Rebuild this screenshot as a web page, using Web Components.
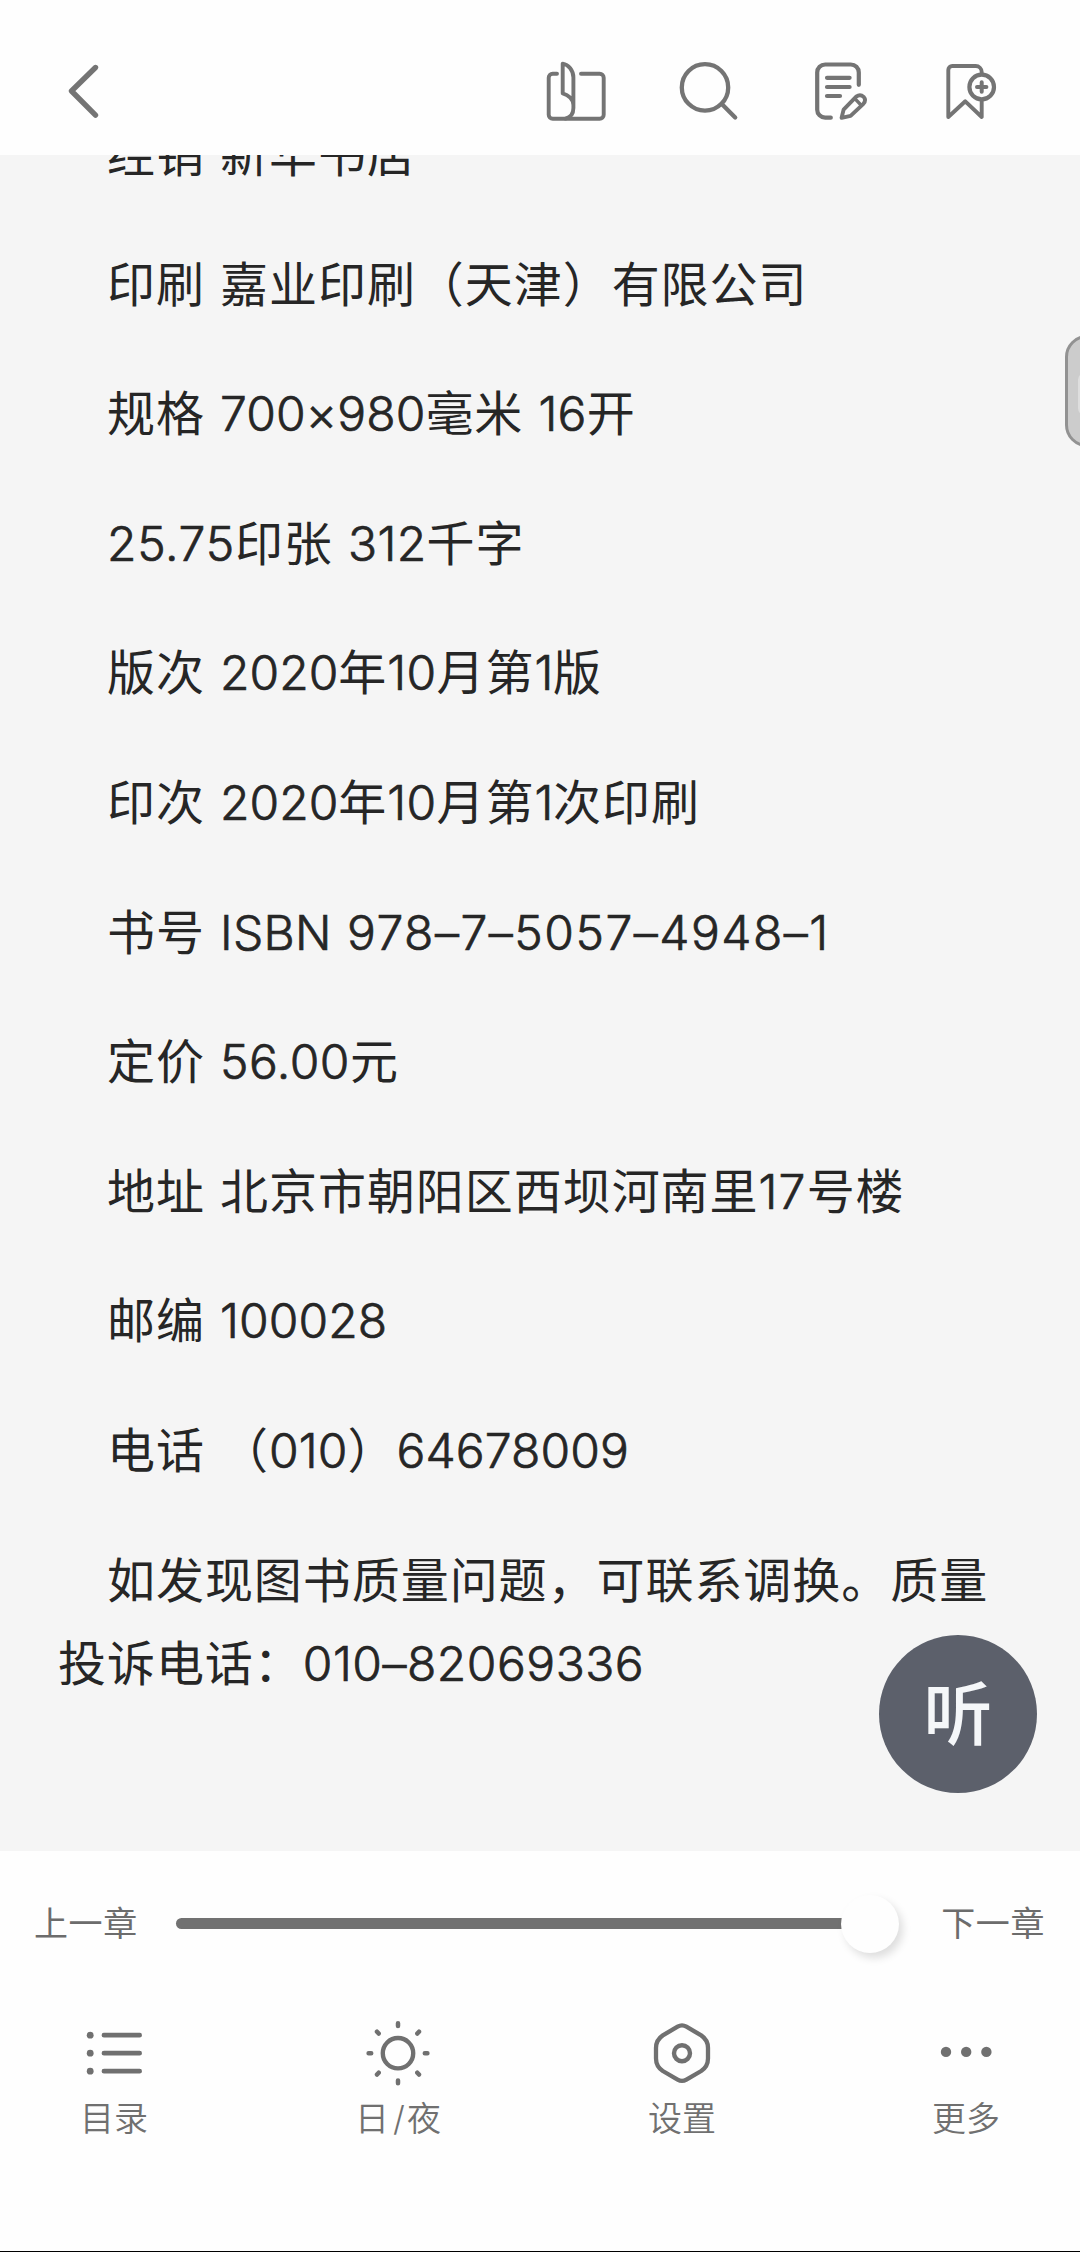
<!DOCTYPE html>
<html lang="zh-CN">
<head>
<meta charset="utf-8">
<meta name="viewport" content="width=device-width">
<title>阅读</title>
<style>
html, body{
    margin: 0;
    padding: 0;
    background: #fefefe;
}
body{
    font-family: Inter, "Noto Sans CJK SC", sans-serif;
    font-feature-settings: "calt" 0;
}
</style>
</head>
<body>
<reader-app>
    <reader-header slot="header"></reader-header>

    <book-line>经销 新华书店</book-line>
    <book-line>印刷 嘉业印刷（天津）有限公司</book-line>
    <book-line>规格 <book-num spacing="0.1">700×980</book-num>毫米 <book-num spacing="0.2">16</book-num>开</book-line>
    <book-line><book-num spacing="0.7">25.75</book-num>印张 <book-num spacing="0.4">312</book-num>千字</book-line>
    <book-line>版次 <book-num spacing="0">2020</book-num>年<book-num spacing="0.4">10</book-num>月第<book-num>1</book-num>版</book-line>
    <book-line>印次 <book-num spacing="0">2020</book-num>年<book-num spacing="0.4">10</book-num>月第<book-num>1</book-num>次印刷</book-line>
    <book-line>书号 <book-num spacing="0.3">ISBN</book-num> <book-num spacing="1.5">978–7–5057–4948–1</book-num></book-line>
    <book-line>定价 <book-num spacing="0.5">56.00</book-num>元</book-line>
    <book-line>地址 北京市朝阳区西坝河南里<book-num spacing="1.2">17</book-num>号楼</book-line>
    <book-line>邮编 <book-num spacing="0.1">100028</book-num></book-line>
    <book-line>电话 （<book-num spacing="0.1">010</book-num>）<book-num spacing="0.1">64678009</book-num></book-line>
    <book-line>如发现图书质量问题，可联系调换。质量投诉电话：<book-num spacing="0.5">010–82069336</book-num></book-line>

    <listen-button slot="float">听</listen-button>
    <edge-handle slot="float"></edge-handle>

    <chapter-slider slot="footer">
        <span slot="prev">上一章</span>
        <span slot="next">下一章</span>
    </chapter-slider>
    <reader-nav slot="footer">
        <nav-item icon="list">目录</nav-item>
        <nav-item icon="sun">日<span style="margin:0 2px 0 4px">/</span>夜</nav-item>
        <nav-item icon="settings">设置</nav-item>
        <nav-item icon="more">更多</nav-item>
    </reader-nav>
</reader-app>

<script>
"use strict"

// every icon is drawn in a 72 x 72 box
const ICONS = {
    back: `<path d="M43.5 11.5 19.5 35 43.5 59.2" stroke-width="5.4"/>`,
    book: `
        <path d="M17 17.7H12.7a4 4 0 0 0-4 4v37a4 4 0 0 0 4 4h47a4 4 0 0 0 4-4v-37a4 4 0 0 0-4-4H41" stroke-width="3.9"/>
        <path d="M22.7 37.3V7.6C28.5 8.5 33.4 14.5 33.4 21.5V52C33.4 58 30 61.5 25.5 62.6M22.7 37.3C28.5 39 33.4 43.5 33.4 49" stroke-width="3.9"/>`,
    search: `
        <circle cx="33" cy="31.4" r="23.2" stroke-width="4.3"/>
        <path d="M50.3 48.6 63.2 61.5" stroke-width="4.3"/>`,
    note: `
        <path d="M26.8 61.7H21.2a8 8 0 0 1-8-8V16.5a8 8 0 0 1 8-8H46.8a8 8 0 0 1 8 8V28.8M23 21.8H45.6M23 31H45.6M23 40H36" stroke-width="4.2"/>
        <path d="M37.6 61.8 39.6 53.6 52.2 40.6Q56.2 37.6 59.6 40.8 62.6 44.2 59.4 47.8L46.6 59.8Z" stroke-width="3.9"/>
        <path d="M51.6 43.4 57 49" stroke-width="3.4"/>`,
    mark: `
        <path d="M45.7 18V16a6 6 0 0 0-6-6H16.3a4 4 0 0 0-4 4V61L29.3 45.3 45.7 61V44" stroke-width="3.9"/>
        <circle cx="45.7" cy="31" r="12.3" stroke-width="4.2"/>
        <path d="M41 31h9.4M45.7 26.3v9.4" stroke-width="4"/>`,
    list: `
        <path d="M25.2 18.2H60.8M25.2 36.2H60.8M25.2 54.2H60.8" stroke-width="4.8" transform="translate(.8 0)"/>
        <g fill="currentColor" stroke="none">
            <circle cx="12.2" cy="18.2" r="3.4"/><circle cx="12.2" cy="36.2" r="3.4"/><circle cx="12.2" cy="54.2" r="3.4"/>
        </g>`,
    sun: `
        <circle cx="36" cy="36.2" r="15.2" stroke-width="4.4"/>
        <path d="M36 6.3v2.6M36 63.4v2.8M6.6 36.2h2.6M62.8 36.2h2.6M15 14.7l1.7 1.8M55.3 55.7l1.7 1.8M57 14.7l-1.7 1.8M16.7 55.7 15 57.5" stroke-width="4.5"/>`,
    settings: `
        <path d="M31.6 9.7Q36 7.2 40.4 9.7L55.2 18.4Q62 23 62 31V41.5Q62 49.4 55.2 54L40.4 62.7Q36 65.2 31.6 62.7L16.8 54Q10 49.4 10 41.5V31Q10 23 16.8 18.4Z" stroke-width="4.3"/>
        <circle cx="36" cy="36.2" r="8" stroke-width="4.4"/>`,
    more: `
        <g fill="currentColor" stroke="none">
            <circle cx="16" cy="34.9" r="5.2"/><circle cx="36.2" cy="34.9" r="5.2"/><circle cx="56.4" cy="34.9" r="5.2"/>
        </g>`
}

class BaseElement extends HTMLElement{
    constructor(){
        super();

        this.attachShadow({mode: "open"});
    }

    // no space between the two parts: inline elements would show it
    connectedCallback(){
        this.shadowRoot.innerHTML = `${this.styles()}${this.render()}`
    }

    render(){
        return `<slot></slot>`
    }
}

class UiIcon extends BaseElement{
    render(){
        return `
            <svg width="72" height="72" viewBox="0 0 72 72" fill="none" stroke="currentColor"
                stroke-linecap="round" stroke-linejoin="round">${ICONS[this.getAttribute('name')]}</svg>
        `
    }

    styles(){
        return `<style>
        :host{ display: block; width: 72px; height: 72px; }
        svg{ display: block; }
        </style>`
    }
}

class ReaderApp extends BaseElement{
    render(){
        return `
            <slot name="header"></slot>
            <main><div class="page"><slot></slot></div></main>
            <footer><slot name="footer"></slot></footer>
            <slot name="float"></slot>
        `
    }

    styles(){
        return `<style>
        :host{
            display: flex;
            flex-direction: column;
            position: relative;
            box-sizing: border-box;
            height: 2252px;
            overflow: hidden;
            background: #fefefe;
            border-bottom: 1px solid #000;
        }
        main{
            height: 1696px;
            flex: none;
            overflow: hidden;
            background: #f5f5f5;
        }
        /* the text is scrolled, so its first line is cut by the header */
        .page{
            margin-top: -42px;
            padding: 0 57px 0 58px;
        }
        footer{
            flex: 1;
            display: flex;
            flex-direction: column;
        }
        </style>`
    }
}

class ReaderHeader extends BaseElement{
    render(){
        return `
            <ui-icon name="back"></ui-icon>
            <div class="tools">
                ${['book', 'search', 'note', 'mark'].map(name => `<ui-icon name="${name}"></ui-icon>`).join('\n')}
            </div>
        `
    }

    styles(){
        return `<style>
        :host{
            display: flex;
            justify-content: space-between;
            flex: none;
            box-sizing: border-box;
            height: 155px;
            padding: 56px 72px 0 52px;
            background: #fefefe;
            color: #747474;
        }
        .tools{
            display: flex;
            gap: 60px;
        }
        </style>`
    }
}

class BookLine extends BaseElement{
    styles(){
        return `<style>
        :host{
            display: block;
            margin-bottom: 45.9px;
            font-size: 48px;
            line-height: 83.7px;
            letter-spacing: 0.95px;
            word-spacing: 0.7px;
            text-indent: 49px;
            color: #262626;
            word-break: break-all;
        }
        </style>`
    }
}

// digits and latin letters: light face, thickened a little to sit beside the hanzi
class BookNum extends BaseElement{
    styles(){
        return `<style>
        :host{
            display: inline;
            font-weight: 300;
            -webkit-text-stroke: 0.7px currentColor;
            letter-spacing: ${this.getAttribute('spacing') || -0.3}px;
        }
        </style>`
    }
}

class ListenButton extends BaseElement{
    styles(){
        return `<style>
        :host{
            position: absolute;
            left: 879px;
            top: 1634.5px;
            width: 158px;
            height: 158px;
            display: flex;
            align-items: center;
            justify-content: center;
            border-radius: 50%;
            background: #5c606b;
            color: #f5f7f9;
            font-size: 69px;
            font-weight: 500;
            line-height: 72px;
        }
        slot{
            display: block;
            padding-top: 2px;
        }
        </style>`
    }
}

class EdgeHandle extends BaseElement{
    render(){
        return `<i></i>`
    }

    styles(){
        return `<style>
        :host{
            position: absolute;
            left: 1065px;
            top: 335px;
            width: 60px;
            height: 112px;
            box-sizing: border-box;
            border: 3px solid #929292;
            border-radius: 22px;
            background: #cccccc;
        }
        i{
            display: block;
            width: 30px;
            height: 44px;
            margin: 34px 0 0 10px;
            border-radius: 8px;
            background: #dedede;
        }
        </style>`
    }
}

class ChapterSlider extends BaseElement{
    render(){
        return `
            <slot name="prev"></slot>
            <div class="track"><div class="thumb"></div></div>
            <slot name="next"></slot>
        `
    }

    styles(){
        return `<style>
        :host{
            display: flex;
            align-items: center;
            justify-content: space-between;
            height: 145px;
            padding: 0 35px 0 34px;
            font-size: 34px;
            line-height: 50px;
            letter-spacing: 0.6px;
            color: #6c6c6c;
        }
        .track{
            display: flex;
            align-items: center;
            justify-content: flex-end;
            width: 723px;
            height: 11.5px;
            margin-right: 4px;
            border-radius: 6px;
            background: linear-gradient(90deg, #717171 690px, transparent 690px);
        }
        .thumb{
            flex: none;
            width: 58px;
            height: 58px;
            border-radius: 50%;
            background: #fefefe;
            box-shadow: 4px 5px 9px rgba(0, 0, 0, .13);
        }
        </style>`
    }
}

class ReaderNav extends BaseElement{
    styles(){
        return `<style>
        :host{
            display: flex;
            justify-content: space-between;
            padding: 21px 54px 0 54px;
            color: #707070;
        }
        </style>`
    }
}

class NavItem extends BaseElement{
    render(){
        return `
            <ui-icon name="${this.getAttribute('icon')}"></ui-icon>
            <div><slot></slot></div>
        `
    }

    styles(){
        return `<style>
        :host{
            display: flex;
            flex-direction: column;
            align-items: center;
            width: 120px;
            font-size: 34px;
            line-height: 50px;
            font-weight: 350;
            white-space: nowrap;
        }
        div{ margin-top: 5px; }
        </style>`
    }
}

customElements.define('ui-icon', UiIcon);
customElements.define('reader-app', ReaderApp);
customElements.define('reader-header', ReaderHeader);
customElements.define('book-line', BookLine);
customElements.define('book-num', BookNum);
customElements.define('listen-button', ListenButton);
customElements.define('edge-handle', EdgeHandle);
customElements.define('chapter-slider', ChapterSlider);
customElements.define('reader-nav', ReaderNav);
customElements.define('nav-item', NavItem);
</script>
</body>
</html>
